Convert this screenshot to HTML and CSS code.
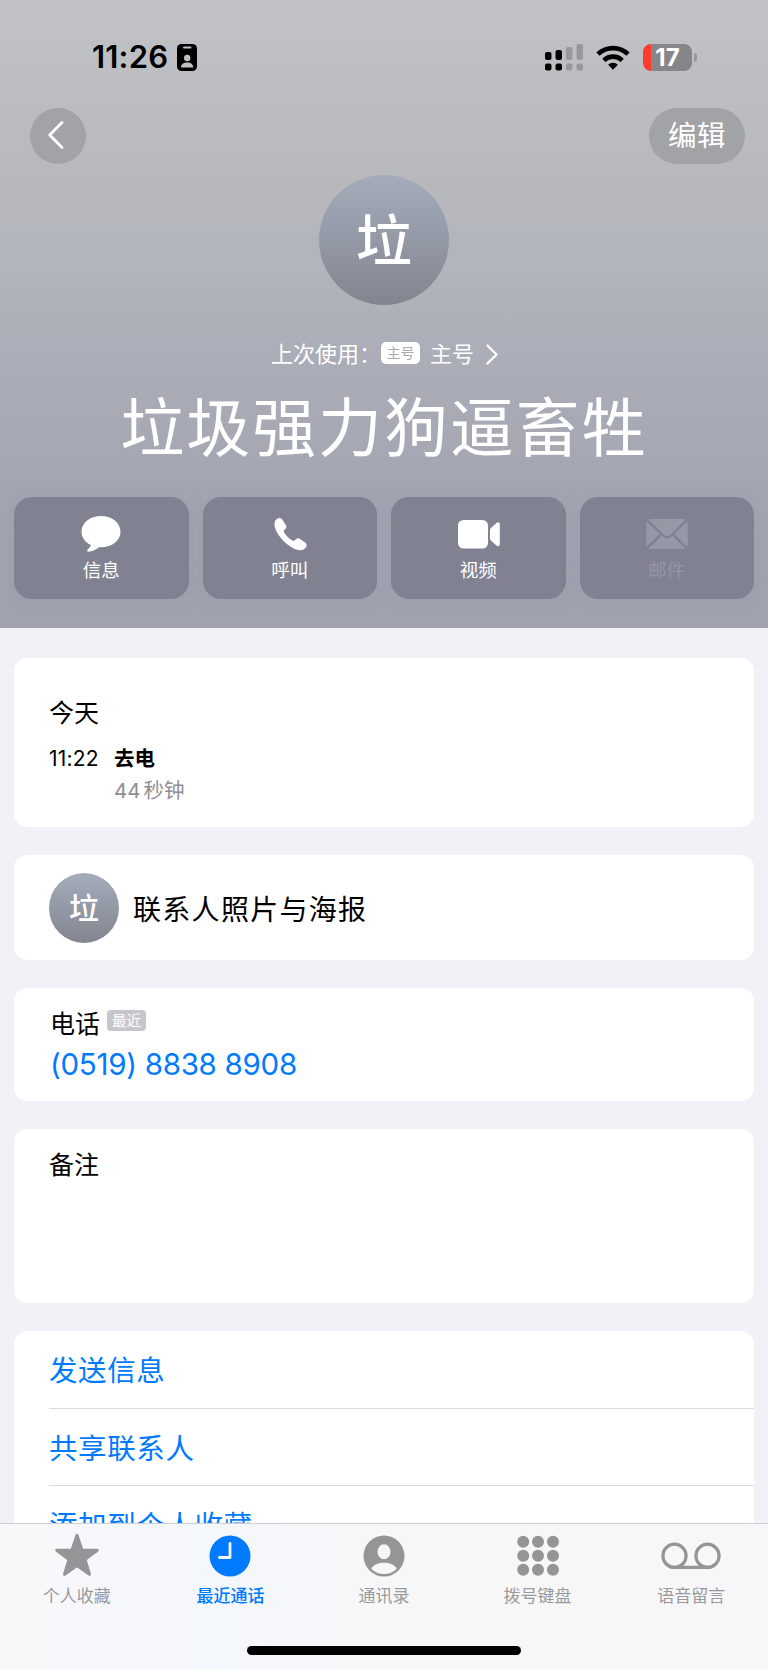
FILE: index.html
```html
<!DOCTYPE html>
<html lang="zh-CN">
<head>
    <meta charset="UTF-8">
    <meta name="viewport" content="width=device-width, initial-scale=1.0">
    <title>联系人</title>
    <link rel="stylesheet" href="styles.css">
</head>
<body>
    <div class="phone">
        <header class="header">
            <div class="status-bar">
                <div class="status-left">
                    <span class="time">11:26</span>
                    <svg width="20" height="27" viewBox="0 0 20 27">
                        <rect width="20" height="27" rx="4.5" fill="#000"/>
                        <rect x="6" y="2.6" width="8.5" height="2" rx="1" fill="#bfc0c4"/>
                        <circle cx="10.2" cy="14" r="3.2" fill="#bfc0c4"/>
                        <path d="M4 23.5c0-3.400 2.600-5 6.200-5s6 1.600 6 5z" fill="#bfc0c4"/>
                    </svg>
                </div>
                <div class="status-right">
                    <svg width="38" height="27" viewBox="0 0 38 27">
                        <g fill="#000">
                            <rect x="0" y="8" width="6.500" height="8" rx="2"/>
                            <rect x="10.500" y="6" width="6.500" height="10" rx="2"/>
                            <rect x="0" y="19.500" width="6.500" height="7" rx="2"/>
                            <rect x="10.500" y="19.500" width="6.500" height="7" rx="2"/>
                        </g>
                        <g fill="#97989c">
                            <rect x="21" y="3" width="6.500" height="13" rx="2"/>
                            <rect x="31.500" y="0" width="6.500" height="16" rx="2"/>
                            <rect x="21" y="19.500" width="6.500" height="7" rx="2"/>
                            <rect x="31.500" y="19.500" width="6.500" height="7" rx="2"/>
                        </g>
                    </svg>
                    <svg class="wifi" width="34" height="25" viewBox="0 0 34 25">
                        <g fill="none" stroke="#000" stroke-width="4.600">
                            <path d="M2 9.200a21.500 21.500 0 0 1 30 0"/>
                            <path d="M7.800 15.300a13.300 13.300 0 0 1 18.400 0"/>
                        </g>
                        <path d="M17 24.800l-4.900-5a7 7 0 0 1 9.800 0z" fill="#000"/>
                    </svg>
                    <div class="battery"><span class="battery-body">17</span><i class="battery-tip"></i></div>
                </div>
            </div>

            <nav class="nav">
                <a class="back">
                    <svg width="16" height="28" viewBox="0 0 16 28"><path d="M14 1.500L1.700 14 14 26.500" fill="none" stroke="#fff" stroke-width="2.800" stroke-linecap="round" stroke-linejoin="round"/></svg>
                </a>
                <a class="edit">编辑</a>
            </nav>

            <div class="avatar">垃</div>

            <div class="last-used">
                <span>上次使用：</span>
                <span class="sim-badge">主号</span>
                <span class="sim-name">主号</span>
                <svg width="12" height="21" viewBox="0 0 12 21"><path d="M1.500 1.500l9 9-9 9" fill="none" stroke="#fff" stroke-width="2.400" stroke-linecap="round" stroke-linejoin="round"/></svg>
            </div>

            <h1 class="name">垃圾强力狗逼畜牲</h1>

            <div class="actions">
                <a class="action">
                    <svg width="40" height="40" viewBox="0 0 40 40"><path d="M20 3c10.800 0 19.500 6.800 19.500 15.700S31 34.200 20 34.200c-.8 0-1.500 0-2 .1-3 2.300-6.800 4.400-10.300 4.500-1.600 0-2-1.300-1-2.300 1.600-1.500 2.700-3 3.200-4.500C4.200 29.200.5 24.500.5 18.700.5 9.800 9.200 3 20 3z" fill="#fff"/></svg>
                    <span>信息</span>
                </a>
                <a class="action">
                    <svg width="40" height="40" viewBox="0 0 40 40"><path d="M7.300 5.800c1.800-1.200 3.600-.9 4.900.8l3.500 5.100c1.100 1.600.9 2.800-.2 4.100l-1.300 1.500c-.6.700-.6 1.300-.1 2.100 2 3.300 4.800 6 8.300 8.200.8.500 1.500.4 2.100-.1l1.500-1.200c1.400-1.200 2.600-1.200 4-.3l5.200 3.600c1.600 1.200 1.900 2.800.9 4.500-1.600 2.800-4.700 3.600-7.900 3-4.700-.9-9.600-4.200-14.200-8.600C9.200 23.700 5.700 18.600 4.700 13.500c-.6-3.400 0-6.200 2.600-7.700z" fill="#fff"/></svg>
                    <span>呼叫</span>
                </a>
                <a class="action">
                    <svg width="44" height="40" viewBox="0 0 44 40"><rect x="2" y="7" width="30" height="28.500" rx="5.500" fill="#fff"/><path d="M34 17.300c0-1 .3-1.600 1-2.200l5.400-5c1.700-1.400 3.400-.7 3.400 1.400v19.600c0 2.200-1.700 2.800-3.400 1.400l-5.400-5c-.7-.6-1-1.200-1-2.200z" fill="#fff"/></svg>
                    <span>视频</span>
                </a>
                <a class="action disabled">
                    <svg width="42" height="40" viewBox="0 0 42 40">
                        <g fill="#9798a6">
                            <path d="M2.500 6.500Q3.300 6 5 6h32q1.700 0 2.500.5L24.800 21.300c-2.500 2.500-5.100 2.500-7.600 0z"/>
                            <path d="M.7 8.500L13.800 20.800.7 33.800Q.3 33 .3 32V10.500q0-1.200.4-2z"/>
                            <path d="M41.300 8.500L28.200 20.800l13.100 13q.4-.8.400-1.800V10.500q0-1.200-.4-2z"/>
                            <path d="M2.700 35.500l13-12.700c3.500 3.400 7.100 3.400 10.600 0l13 12.700q-.8.500-2.300.5H5q-1.500 0-2.300-.5z"/>
                        </g>
                    </svg>
                    <span>邮件</span>
                </a>
            </div>
        </header>

        <main class="content">
            <section class="card call-log">
                <h2>今天</h2>
                <div class="call">
                    <span class="call-time">11:22</span>
                    <div>
                        <div class="call-type">去电</div>
                        <div class="call-length">44<span>秒钟</span></div>
                    </div>
                </div>
            </section>

            <section class="card poster">
                <div class="avatar small">垃</div>
                <span>联系人照片与海报</span>
            </section>

            <section class="card number">
                <div class="number-label">电话<span class="recent">最近</span></div>
                <a class="number-value">(0519) 8838 8908</a>
            </section>

            <section class="card notes">备注</section>

            <section class="card links">
                <a>发送信息</a>
                <a>共享联系人</a>
                <a>添加到个人收藏</a>
            </section>
        </main>

        <footer class="tab-bar">
            <div class="tabs">
                <a class="tab">
                    <svg width="46" height="46" viewBox="0 0 46 46"><path d="M23 3.500l4.900 14.600 15.300.2-12.300 9.200 4.500 14.700L23 33.400l-12.400 8.800 4.500-14.700L2.800 18.300l15.300-.2z" fill="#949597" stroke="#949597" stroke-width="3.200" stroke-linejoin="round"/></svg>
                    <span>个人收藏</span>
                </a>
                <a class="tab active">
                    <svg width="46" height="46" viewBox="0 0 46 46"><circle cx="23" cy="24" r="20.500" fill="#007aff"/><path d="M23 11.500v14H12.500" fill="none" stroke="#f6f8fb" stroke-width="2.800" stroke-linecap="round" stroke-linejoin="round"/></svg>
                    <span>最近通话</span>
                </a>
                <a class="tab">
                    <svg width="46" height="46" viewBox="0 0 46 46"><circle cx="23" cy="24" r="20.500" fill="#949597"/><ellipse cx="23" cy="19.800" rx="6.500" ry="7.500" fill="#f7f7f9"/><path d="M10.200 36.800C12.500 32.700 17.500 30.800 23 30.800s10.500 1.900 12.800 6c-3.300 3.500-7.700 5.200-12.800 5.200s-9.500-1.700-12.800-5.200z" fill="#f7f7f9"/></svg>
                    <span>通讯录</span>
                </a>
                <a class="tab">
                    <svg width="46" height="46" viewBox="0 0 46 46">
                        <g fill="#949597">
                            <circle cx="8.200" cy="9.800" r="6"/><circle cx="23" cy="9.800" r="6"/><circle cx="38" cy="9.800" r="6"/>
                            <circle cx="8.200" cy="23.800" r="6"/><circle cx="23" cy="23.800" r="6"/><circle cx="38" cy="23.800" r="6"/>
                            <circle cx="8.200" cy="37.800" r="6"/><circle cx="23" cy="37.800" r="6"/><circle cx="38" cy="37.800" r="6"/>
                        </g>
                    </svg>
                    <span>拨号键盘</span>
                </a>
                <a class="tab">
                    <svg width="60" height="46" viewBox="0 0 60 46"><g fill="none" stroke="#949597" stroke-width="3.200"><circle cx="13.500" cy="23.800" r="11.600"/><circle cx="46.500" cy="23.800" r="11.600"/><path d="M13.500 35.400h33"/></g></svg>
                    <span>语音留言</span>
                </a>
            </div>
            <div class="home-indicator"></div>
        </footer>
    </div>
</body>
</html>
```
FILE: styles.css
```css
* {
    box-sizing: border-box;
}

body {
    margin: 0;
    font-family: Inter, "Noto Sans CJK SC", sans-serif;
    background-color: #f2f1f7;
    color: #000;
}

svg {
    display: block;
    flex-shrink: 0;
}

.phone {
    display: flex;
    flex-direction: column;
    width: 768px;
    height: 1669px;
    overflow: hidden;
}

/* Header */
.header {
    display: flex;
    flex-direction: column;
    align-items: center;
    flex-shrink: 0;
    height: 628px;
    background: linear-gradient(#c1c2c6 0, #b8b9bc 170px, #b1b5bc 260px, #a9abb7 390px, #a3a5b1 490px, #9fa1ae 628px);
    color: #fff;
}

.status-bar {
    display: flex;
    justify-content: space-between;
    width: 100%;
    height: 108px;
    padding: 43px 71px 0 92px;
    color: #000;
}

.status-left, .status-right {
    display: flex;
    align-items: center;
    height: 28px;
}

.time {
    width: 85px;
    font-size: 31px;
    font-weight: 600;
    letter-spacing: 0.2px;
    line-height: 28px;
}

.wifi {
    margin: 0 13px;
}

.battery {
    display: flex;
    align-items: center;
    gap: 2px;
}

.battery-body {
    width: 49px;
    height: 27px;
    border-radius: 8px;
    background: linear-gradient(90deg, #ff3b30 8px, #85858a 8px);
    color: #fff;
    font-size: 24px;
    font-weight: 700;
    line-height: 27px;
    text-align: center;
}

.battery-tip {
    width: 3px;
    height: 9px;
    border-radius: 0 4px 4px 0;
    background-color: #97989c;
}

.nav {
    display: flex;
    justify-content: space-between;
    width: 100%;
    height: 56px;
    padding: 0 23px 0 30px;
}

.back, .edit {
    display: flex;
    align-items: center;
    justify-content: center;
    width: 56px;
    border-radius: 28px;
    background-color: #a2a3a7;
}

.back {
    padding: 0 4px 2px 0;
}

.edit {
    width: 96px;
    font-size: 28.5px;
    letter-spacing: 0.6px;
    line-height: 56px;
}

.avatar {
    width: 130px;
    height: 130px;
    margin-top: 11px;
    border-radius: 50%;
    background: linear-gradient(#a4acbb, #82858f);
    color: #fff;
    font-size: 56px;
    font-weight: 500;
    line-height: 133px;
    text-align: center;
}

.last-used {
    display: flex;
    align-items: center;
    width: 498px;
    height: 30px;
    margin-top: 34px;
    padding-left: 136px;
    font-size: 22px;
    line-height: 30px;
    white-space: nowrap;
}

.last-used > span:first-child {
    width: 110px;
}

.sim-badge {
    width: 39px;
    height: 22px;
    margin-bottom: 3px;
    border-radius: 5px;
    background-color: #fff;
    color: #a9abb7;
    font-size: 14px;
    line-height: 22px;
    text-align: center;
}

.sim-name {
    width: 56px;
    margin-left: 10px;
}

.name {
    margin: 14px 0 0;
    font-size: 64px;
    font-weight: 400;
    letter-spacing: 1.9px;
    line-height: 90px;
    white-space: nowrap;
}

.actions {
    display: grid;
    grid-template-columns: repeat(4, 1fr);
    gap: 14px;
    width: 740px;
    margin-top: 24px;
}

.action {
    display: flex;
    flex-direction: column;
    align-items: center;
    height: 102px;
    padding-top: 16px;
    border-radius: 18px;
    background-color: #808292;
    box-shadow: 0 0 20px rgba(128, 130, 146, 0.12);
    font-size: 18.5px;
    line-height: 34px;
}

.disabled {
    color: #9496a4;
}

/* Cards */
.content {
    display: flex;
    flex: 1;
    flex-direction: column;
    gap: 28px;
    min-height: 0;
    padding: 30px 14px 0;
    overflow: hidden;
}

.card {
    flex-shrink: 0;
    padding: 0 35px;
    border-radius: 13px;
    background-color: #fff;
}

.call-log {
    height: 169px;
    padding-top: 37px;
}

.call-log h2 {
    margin: 0;
    font-size: 25px;
    font-weight: 400;
    line-height: 36px;
}

.call {
    display: flex;
    margin-top: 12px;
    font-size: 20.5px;
    line-height: 32px;
}

.call-time {
    width: 65px;
    font-size: 21px;
    letter-spacing: 0.2px;
}

.call-type {
    font-weight: 600;
}

.call-length {
    color: #8e8e93;
}

.call-length span {
    margin-left: 3px;
}

.poster {
    display: flex;
    align-items: center;
    gap: 14px;
    height: 105px;
    font-size: 28px;
    letter-spacing: 1.3px;
}

.small {
    width: 70px;
    height: 70px;
    margin: 0;
    font-size: 30px;
    letter-spacing: 0;
    line-height: 71px;
}

.number {
    height: 113px;
    padding-top: 18px;
}

.number-label {
    display: flex;
    align-items: center;
    padding-left: 1px;
    font-size: 25px;
    line-height: 36px;
}

.recent {
    width: 39px;
    height: 21px;
    margin: 0 0 7px 7px;
    border-radius: 4px;
    background-color: #c7c6cc;
    color: #fff;
    font-size: 14.5px;
    line-height: 21px;
    text-align: center;
}

.number-value {
    display: block;
    margin-top: 3px;
    padding-left: 1px;
    color: #007aff;
    font-size: 29.5px;
    letter-spacing: -0.28px;
    line-height: 38px;
}

.notes {
    height: 174px;
    padding-top: 18px;
    font-size: 25px;
    line-height: 36px;
}

.links {
    padding-right: 0;
}

.links a {
    display: block;
    height: 77px;
    color: #007aff;
    font-size: 28.5px;
    letter-spacing: 0.6px;
    line-height: 79px;
}

.links a + a {
    border-top: 1px solid #dcdcdf;
}

/* Tab bar */
.tab-bar {
    display: flex;
    flex-direction: column;
    align-items: center;
    justify-content: space-between;
    flex-shrink: 0;
    height: 146px;
    padding: 8px 0 14px;
    border-top: 1px solid #cfcfd3;
    background: linear-gradient(90deg, #f8f8fa, #f4f7fb 28%, #f7f7f8 55%, #f7f7f9);
}

.tabs {
    display: grid;
    grid-template-columns: repeat(5, 1fr);
    width: 100%;
}

.tab {
    display: flex;
    flex-direction: column;
    align-items: center;
    color: #9a9a9d;
    font-size: 17px;
    line-height: 37px;
}

.active {
    color: #007aff;
    font-weight: 500;
}

.home-indicator {
    width: 274px;
    height: 9px;
    border-radius: 5px;
    background-color: #000;
}
```
